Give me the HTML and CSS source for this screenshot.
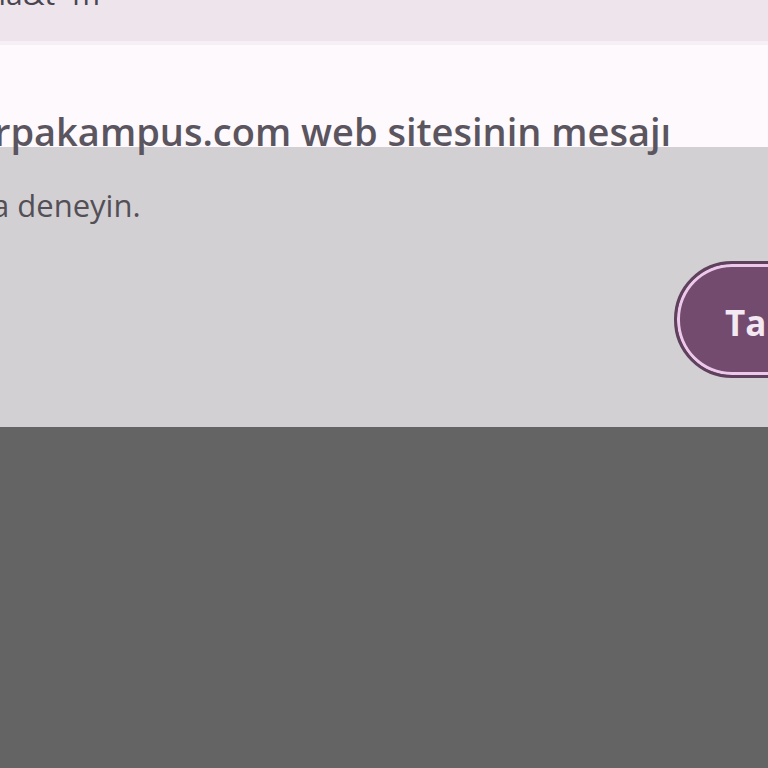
FILE: index.html
```html
<!DOCTYPE html>
<html lang="tr">
<head>
<meta charset="utf-8">
<link rel="stylesheet" href="styles.css">
</head>
<body>
<div class="page">
  <div class="urlbar"><span class="url">ına&amp;t=m</span></div>
  <div class="sep"></div>
  <div class="dialog-head">
    <h1 class="title">rpakampus.com web sitesinin mesajı</h1>
  </div>
  <div class="dialog-body">
    <p class="msg">a deneyin.</p>
    <div class="actions">
      <button class="btn">Tamam</button>
    </div>
  </div>
  <div class="backdrop"></div>
</div>
</body>
</html>
```
FILE: styles.css
```css
html, body {
  margin: 0;
  padding: 0;
  width: 768px;
  height: 768px;
  overflow: hidden;
  background: #646464;
}
.page {
  width: 768px;
  height: 768px;
  overflow: hidden;
  font-family: "Open Sans", "Noto Sans", sans-serif;
}
.urlbar {
  height: 41px;
  background: #ede4ec;
  overflow: hidden;
}
.url {
  display: block;
  margin-top: -21px;
  margin-left: -20px;
  font-size: 30px;
  line-height: 30px;
  color: #4a4650;
  white-space: nowrap;
}
.sep {
  height: 4px;
  background: #f7eff6;
}
.dialog-head {
  height: 102px;
  background: #fdf9fc;
  display: flex;
  align-items: flex-end;
}
.title {
  margin: 0 0 -7px -6px;
  font-size: 38px;
  line-height: 46px;
  font-weight: 600;
  color: #5a555f;
  white-space: nowrap;
}
.dialog-body {
  height: 280px;
  background: #d3d0d3;
  display: flex;
  flex-direction: column;
}
.msg {
  margin: 38px 0 0 -8px;
  font-size: 31px;
  line-height: 40px;
  color: #534f57;
  white-space: nowrap;
}
.actions {
  display: flex;
  justify-content: flex-start;
  padding-left: 674px;
  margin-top: 36px;
}
.btn {
  flex: none;
  width: 240px;
  height: 117px;
  border-radius: 58px;
  border: 3px solid #5f405d;
  box-shadow: inset 0 0 0 3px #ecc9ea;
  background: #734b6f;
  color: #f4e8f2;
  font-family: "Open Sans", "Noto Sans", sans-serif;
  font-size: 35px;
  font-weight: 700;
  text-align: left;
  padding: 6px 0 0 48px;
  box-sizing: border-box;
}
.backdrop {
  height: 341px;
  background: #646464;
}
```
